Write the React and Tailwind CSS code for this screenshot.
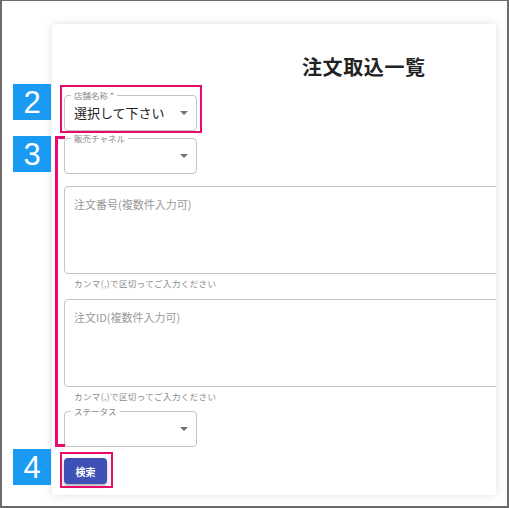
import React from 'react';

const jp = { fontFamily: '"Noto Sans CJK JP", "Noto Sans", sans-serif' };

const Arrow = () => (
  <svg width="8" height="5" viewBox="0 0 8 5" className="shrink-0">
    <path d="M0 0 L8 0 L4 4 Z" fill="#707070" />
  </svg>
);

const SelectField = ({ label, value }) => (
  <div className="relative w-[133px] h-[36px] rounded-[4px] border border-[#c4c4c4] flex items-center justify-between pl-[9px] pr-[8px]">
    <span className="absolute -top-[7px] left-[6px] bg-white px-[3px] text-[8.5px] leading-[12px] text-[#8a8a8a]">
      {label}
    </span>
    <span className="text-[13px] text-[#222]">{value}</span>
    <Arrow />
  </div>
);

const TextAreaField = ({ placeholder }) => (
  <div className="flex flex-col gap-[3px]">
    <div className="w-[560px] h-[88px] rounded-[4px] border border-[#c4c4c4] pl-[9px] pt-[9px] text-[11px] text-[#9a9a9a]">
      {placeholder}
    </div>
    <div className="pl-[10px] text-[8.5px] leading-[12px] text-[#8a8a8a] tracking-[0.4px]">
      カンマ(,)で区切ってご入力ください
    </div>
  </div>
);

const Badge = ({ n, top }) => (
  <div
    className="absolute left-[11px] w-[38px] h-[36px] bg-[#1a9af2] text-white flex items-center justify-center text-[31px] leading-none"
    style={{ top, fontFamily: '"Liberation Sans", Arial, sans-serif' }}
  >
    {n}
  </div>
);

export default function App() {
  return (
    <div className="relative w-[509px] h-[508px] bg-white border-2 border-t border-[#6b6b6b] overflow-hidden" style={jp}>
      <div className="pt-[23px] pl-[50px]">
        <div className="w-[444px] h-[471px] bg-white rounded-tl-[4px] overflow-hidden shadow-[0_0_8px_rgba(0,0,0,0.13)] pl-[12px]">
          <h1 className="pt-[29px] pl-[238px] text-[20px] font-bold leading-[28px] text-[#222] tracking-[0.6px]">注文取込一覧</h1>
          <div className="mt-[14px] flex flex-col items-start">
            <SelectField label="店舗名称 *" value="選択して下さい" />
            <div className="mt-[7px]">
              <SelectField label="販売チャネル" />
            </div>
            <div className="mt-[12px]">
              <TextAreaField placeholder="注文番号(複数件入力可)" />
            </div>
            <div className="mt-[10px]">
              <TextAreaField placeholder="注文ID(複数件入力可)" />
            </div>
            <div className="mt-[9px]">
              <SelectField label="ステータス" />
            </div>
            <button className="mt-[11px] w-[43px] h-[26px] rounded-[4px] bg-[#3f51b5] text-white text-[10px] font-bold shadow-[0_2px_3px_rgba(0,0,0,0.3)]">
              検索
            </button>
          </div>
        </div>
      </div>

      <Badge n="2" top={83} />
      <Badge n="3" top={135} />
      <Badge n="4" top={448} />

      <div className="absolute left-[58px] top-[84px] w-[142px] h-[48px] border-2 border-[#ea0a6c]" />
      <div className="absolute left-[53px] top-[135px] w-[10px] h-[311px] border-[3px] border-r-0 border-[#ea0a6c]" />
      <div className="absolute left-[58px] top-[451px] w-[53px] h-[36px] border-2 border-[#ea0a6c]" />
    </div>
  );
}
